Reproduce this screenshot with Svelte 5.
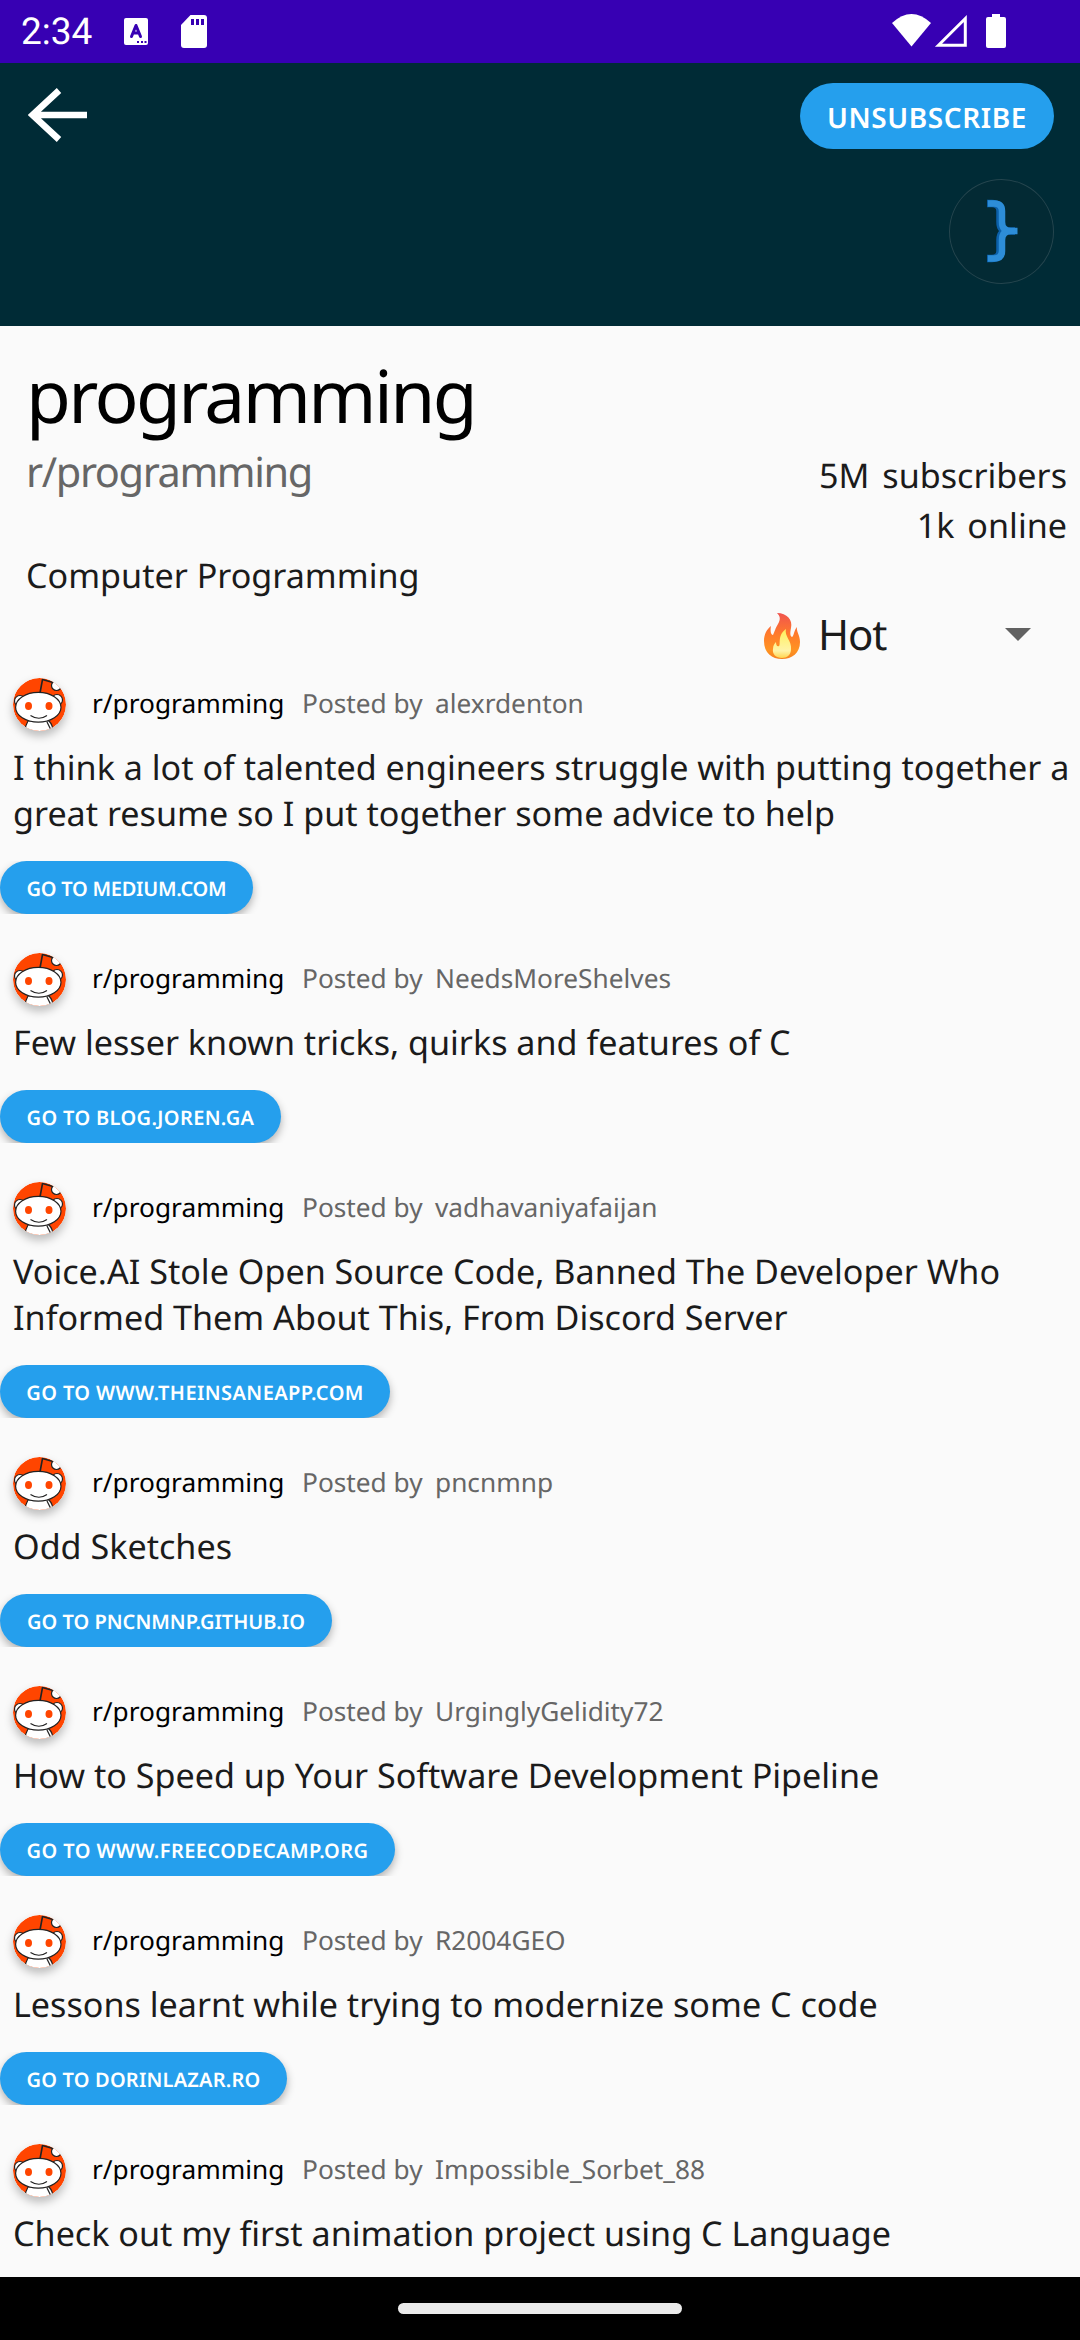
<script>
  const posts = [
    { user: 'alexrdenton', title: 'I think a lot of talented engineers struggle with putting together a great resume so I put together some advice to help', site: 'medium.com', w: 253, track: -0.25 },
    { user: 'NeedsMoreShelves', title: 'Few lesser known tricks, quirks and features of C', site: 'blog.joren.ga', w: 281, track: 0.35 },
    { user: 'vadhavaniyafaijan', title: 'Voice.AI Stole Open Source Code, Banned The Developer Who Informed Them About This, From Discord Server', site: 'www.theinsaneapp.com', w: 390, track: 0.42 },
    { user: 'pncnmnp', title: 'Odd Sketches', site: 'pncnmnp.github.io', w: 332, track: 0 },
    { user: 'UrginglyGelidity72', title: 'How to Speed up Your Software Development Pipeline', site: 'www.freecodecamp.org', w: 395, track: 0.42 },
    { user: 'R2004GEO', title: 'Lessons learnt while trying to modernize some C code', site: 'dorinlazar.ro', w: 287, track: 0.2 },
    { user: 'Impossible_Sorbet_88', title: 'Check out my first animation project using C Language', site: '', w: 0, track: 0 }
  ];
</script>

<div class="screen">
  <div class="status">
    <span class="time">2:34</span>
    <svg class="app" width="24" height="27" viewBox="0 0 24 27"><rect width="24" height="27" rx="2" fill="#fff" /><path d="M7.500 18.500L12 7.500L16.500 18.500M9 15H15" fill="none" stroke="#3700b3" stroke-width="3" stroke-linecap="round" stroke-linejoin="round" /><path d="M13 24h2m2 0h2m1.500 0h2" stroke="#3700b3" stroke-width="2" /></svg>
    <svg class="sd" width="26" height="33" viewBox="0 0 26 33"><path d="M9.500 0H23Q26 0 26 3V30Q26 33 23 33H3Q0 33 0 30V10Z" fill="#fff" /><path d="M10 4h3v6h-3zM15 4h3v6h-3zM20 4h3v6h-3z" fill="#3700b3" /></svg>
    <svg class="sys" width="116" height="34" viewBox="0 0 116 34"><path d="M0 9Q19.500-9 39 9L19.500 32.500Z" fill="#fff" /><path d="M46.500 31.200L73.300 4.500V31.200Z" fill="none" stroke="#fff" stroke-width="3" /><path d="M100 0h8v3h4q2 0 2 2v27q0 2-2 2H96q-2 0-2-2V5q0-2 2-2h4z" fill="#fff" /></svg>
  </div>

  <header>
    <div class="bar">
      <svg width="60" height="54" viewBox="0 0 60 54"><path d="M31 2.500L4.500 27L31 51.500M5 27H59" fill="none" stroke="#fff" stroke-width="6.500" /></svg>
      <button class="unsub"><span>UNSUBSCRIBE</span></button>
    </div>
    <div class="icon">
      <svg width="105" height="105" viewBox="0 0 105 105"><path d="M38 24.500H43Q51 24.500 51 32V43Q51 52 60 52H66M60 52Q51 52 51 61V72Q51 79.500 43 79.500H38" fill="none" stroke="#0b60aa" stroke-width="7.500" /><path d="M39 24.500H45Q53 24.500 53 32V43Q53 52 62 52H68.500M62 52Q53 52 53 61V72Q53 79.500 45 79.500H39" fill="none" stroke="#2d8dd8" stroke-width="6.500" /></svg>
    </div>
  </header>

  <section class="about">
    <h1>programming</h1>
    <div class="info">
      <div class="sub">r/programming</div>
      <div class="stats">
        <div><span>5M</span><span>subscribers</span></div>
        <div><span>1k</span><span>online</span></div>
      </div>
    </div>
    <p class="desc">Computer Programming</p>
    <div class="sort">
      <svg class="fire" width="38" height="48" viewBox="0 0 38 48">
        <defs>
          <linearGradient id="flame" x1="0" y1="0" x2="0" y2="1"><stop offset="0" stop-color="#f0544f" /><stop offset=".45" stop-color="#ff7a2b" /><stop offset=".8" stop-color="#ff9322" /><stop offset="1" stop-color="#f58220" /></linearGradient>
          <linearGradient id="core" x1="0" y1="0" x2="0" y2="1"><stop offset="0" stop-color="#fff05a" /><stop offset=".75" stop-color="#fff3a8" /><stop offset="1" stop-color="#ffd54f" /></linearGradient>
        </defs>
        <path d="M14 1C24 1 30 8 28 16C27 21 27 24 29 25C31 24 31 18 34 15C33 19 37 23 37 30C37 41 29 47 19 47C9 47 1 41 1 29C1 22 4 17 8 14C7 19 8 23 10 23C12 19 12 17 15 12C18 7 17 4 14 1Z" fill="url(#flame)" />
        <path d="M23 17C21 24 29 29 28 37C28 43 24 46 19 46C13 46 9 42 10 37C10 33 12 31 13 30C13 33 14 35 16 34C18 33 14 23 23 17Z" fill="url(#core)" />
      </svg>
      <span class="hot">Hot</span>
      <svg class="caret" width="26" height="13" viewBox="0 0 26 13"><path d="M0 0H26L13 13Z" fill="#616161" /></svg>
    </div>
  </section>

  <main>
    {#each posts as post}
      <article>
        <div class="meta">
          <svg class="avatar" width="53" height="53" viewBox="0 0 53 53">
            <defs><clipPath id="disc"><circle cx="26.500" cy="26.500" r="26.500" /></clipPath></defs>
            <g clip-path="url(#disc)" stroke="#222" stroke-width="1.200">
              <rect width="53" height="53" fill="#ff4500" stroke="none" />
              <path d="M27 15L29.500 1.500L40 4.500" fill="none" stroke-width="1.600" />
              <circle cx="43.500" cy="7.500" r="5" fill="#fff" />
              <circle cx="7" cy="23" r="5.500" fill="#fff" /><circle cx="44" cy="22" r="5.500" fill="#fff" />
              <path d="M15 43Q12 48 12 54H40Q40 47 36 43Z" fill="#fff" />
              <path d="M34 44L38 52" />
              <ellipse cx="25.300" cy="29.300" rx="22.700" ry="14.900" fill="#fff" />
              <path d="M17.500 37.500Q26 43 34 37.500" fill="none" />
            </g>
            <ellipse cx="15.500" cy="28" rx="3.500" ry="4" fill="#ff4500" /><ellipse cx="36" cy="28" rx="3.500" ry="4" fill="#ff4500" />
          </svg>
          <span class="name">r/programming</span>
          <span class="by">Posted by</span>
          <span class="by user">{post.user}</span>
        </div>
        <h2>{post.title}</h2>
        {#if post.site}
          <div class="clip"><button class="link" style:width="{post.w}px" style:letter-spacing="{post.track}px">GO TO {post.site.toUpperCase()}</button></div>
        {/if}
      </article>
    {/each}
  </main>

  <footer><div class="pill"></div></footer>
</div>

<style>
  :global(body) { margin: 0; background: #fafafa; }
  .screen { width: 1080px; height: 2340px; display: flex; flex-direction: column; overflow: hidden; background: #fafafa; color: #1b1b1b; font-family: "Noto Sans", sans-serif; text-rendering: geometricPrecision; }
  h1, h2, p { margin: 0; font-weight: 400; }
  svg { display: block; flex: none; }
  button { border: 0; padding: 0; background: #259fed; color: #fff; font-family: "Noto Sans", sans-serif; font-weight: 600; white-space: nowrap; text-rendering: geometricPrecision; }
  .status { height: 63px; flex: none; display: flex; background: #3700b3; box-sizing: border-box; padding: 0 72px 0 21px; }
  .time { width: 103px; font: 400 37px/66px Roboto, sans-serif; color: #fff; }
  .app { margin-top: 18px; }
  .sd { margin: 15px 0 0 33px; }
  .sys { margin: 14px 0 0 auto; }
  header { height: 263px; flex: none; box-sizing: border-box; background: #002b36; padding: 20px 26px 0 28px; }
  .bar { display: flex; justify-content: space-between; height: 66px; }
  .bar svg { margin-top: 5px; }
  .unsub { width: 254px; height: 66px; border-radius: 33px; font-size: 28px; line-height: 70px; letter-spacing: .6px; }
  .icon { width: 105px; height: 105px; margin: 30px 0 0 auto; border-radius: 50%; box-shadow: inset 0 0 0 1px #24454e; background: #032a34; }
  .about { height: 340px; flex: none; }
  h1 { margin-left: 26px; height: 119px; font-size: 73px; line-height: 139px; letter-spacing: -2.600px; color: #000; }
  .info { display: flex; justify-content: space-between; height: 105px; padding: 0 13px 0 26px; }
  .sub { font-size: 41.500px; line-height: 54px; letter-spacing: -1.400px; color: #666; }
  .stats { padding-top: 5px; font-size: 34.125px; line-height: 50px; }
  .stats div { display: flex; justify-content: flex-end; gap: 13px; }
  .desc { margin-left: 26px; font-size: 34.125px; line-height: 50px; height: 56px; }
  .sort { display: flex; height: 60px; }
  .fire { margin: 6px 0 0 763px; }
  .hot { margin-left: 17px; width: 187px; font-size: 42px; line-height: 57px; letter-spacing: -1.200px; }
  .caret { margin-top: 22px; }
  main { flex: 1; overflow: hidden; padding-top: 12px; }
  article { padding-bottom: 39px; }
  .meta { height: 66px; display: flex; padding-left: 13px; font-size: 26.250px; line-height: 51px; }
  .avatar { border-radius: 50%; box-shadow: 0 5px 10px rgba(0, 0, 0, .26); }
  .name { margin-left: 26px; width: 210px; color: #000; }
  .by { color: #666; width: 133px; }
  .user { width: auto; }
  h2 { margin: 0 8px 0 13px; font-size: 34.125px; line-height: 46px; }
  .clip { display: flex; overflow: hidden; height: 53px; margin-top: 25px; }
  .link { height: 53px; border-radius: 27px; font-size: 20px; line-height: 56px; box-shadow: 0 4px 8px rgba(0, 0, 0, .3); }
  footer { height: 63px; flex: none; display: flex; justify-content: center; align-items: center; background: #000; }
  .pill { width: 284px; height: 11px; border-radius: 6px; background: #ebebeb; }
</style>
